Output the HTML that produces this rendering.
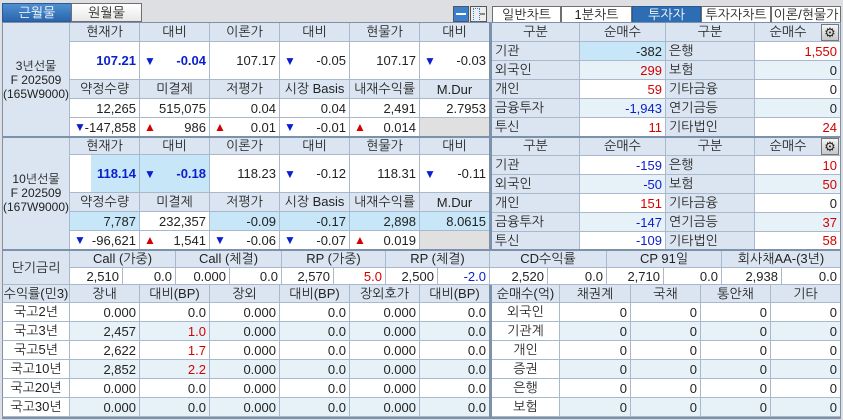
<!DOCTYPE html>
<html><head><meta charset="utf-8">
<style>
body{margin:0;width:843px;height:420px;background:#dedfe3;position:relative;overflow:hidden;font-family:"Liberation Sans","NanumGothic","Noto Sans CJK KR",sans-serif;font-size:13px;color:#222}
.c{position:absolute;box-sizing:border-box;border-right:1px solid #a9b9cb;border-bottom:1px solid #a9b9cb;display:flex;align-items:center;justify-content:flex-end;padding:0 3px;white-space:nowrap;overflow:hidden;background:#fff}
.h{background:#dbe5f1;justify-content:center}
.l{justify-content:flex-start;background:#dbe5f1}
.m{justify-content:center}
.a{background:#e6f2f8}
.s{background:#c7e6f7}
.g{background:#e0e0e0}
.b{color:#0a1ecf}
.rd{color:#d40000}
.bb{color:#0a1ecf;font-weight:bold}
.dn,.up{position:absolute;left:4px;font-size:12px}
.dn{color:#0a1ecf}.up{color:#d40000}
.ln{position:absolute;background:#7d91aa}
.lab{padding:0;font-size:12px;text-align:center;line-height:14px}
.tab{position:absolute;box-sizing:border-box;border:1px solid #6f6f6f;background:linear-gradient(#fff,#e8e8e8);display:flex;align-items:center;justify-content:center;font-size:13px}
.on{background:linear-gradient(#4f8fd0,#2a66ae);color:#fff;border-color:#2a5a96}
</style></head><body>
<div class="tab on" style="left:2px;top:3px;width:70px;height:19px">근월물</div>
<div class="tab" style="left:71px;top:3px;width:71px;height:19px">원월물</div>
<div style="position:absolute;left:453px;top:6px;width:16px;height:16px;background:#3b7fd0;border:1px solid #555;box-sizing:border-box"><div style="position:absolute;left:2px;top:6px;width:10px;height:2px;background:#fff"></div></div>
<div style="position:absolute;left:470px;top:6px;width:17px;height:16px;background:#eee;border:1px solid #555;box-sizing:border-box"><div style="position:absolute;left:2px;top:1px;width:5px;height:12px;border:1px dotted #3b7fd0"></div><div style="position:absolute;left:9px;top:6px;width:5px;height:2px;background:#888"></div></div>
<div class="tab" style="left:492px;top:6px;width:69px;height:17px;background:#fff">일반차트</div>
<div class="tab" style="left:561px;top:6px;width:71px;height:17px;background:#fff">1분차트</div>
<div class="tab on" style="left:632px;top:6px;width:69px;height:17px;background:#2c6db4">투자자</div>
<div class="tab" style="left:701px;top:6px;width:70px;height:17px;background:#fff">투자자차트</div>
<div class="tab" style="left:771px;top:6px;width:70px;height:17px;background:#fff">이론/현물가</div>

<div class="c h lab" style="left:2px;top:23px;width:68px;height:114px;border-left:1px solid #7d91aa">3년선물<br>F 202509<br>(165W9000)</div>
<div class="c h" style="left:70px;top:23px;width:70px;height:19px">현재가</div>
<div class="c h" style="left:140px;top:23px;width:70px;height:19px">대비</div>
<div class="c h" style="left:210px;top:23px;width:70px;height:19px">이론가</div>
<div class="c h" style="left:280px;top:23px;width:70px;height:19px">대비</div>
<div class="c h" style="left:350px;top:23px;width:70px;height:19px">현물가</div>
<div class="c h" style="left:420px;top:23px;width:70px;height:19px">대비</div>
<div class="c bb" style="left:70px;top:42px;width:70px;height:38px">107.21</div>
<div class="c bb" style="left:140px;top:42px;width:70px;height:38px"><span class="dn">▼</span>-0.04</div>
<div class="c" style="left:210px;top:42px;width:70px;height:38px">107.17</div>
<div class="c" style="left:280px;top:42px;width:70px;height:38px"><span class="dn">▼</span>-0.05</div>
<div class="c" style="left:350px;top:42px;width:70px;height:38px">107.17</div>
<div class="c" style="left:420px;top:42px;width:70px;height:38px"><span class="dn">▼</span>-0.03</div>
<div class="c h" style="left:70px;top:80px;width:70px;height:19px">약정수량</div>
<div class="c h" style="left:140px;top:80px;width:70px;height:19px">미결제</div>
<div class="c h" style="left:210px;top:80px;width:70px;height:19px">저평가</div>
<div class="c h" style="left:280px;top:80px;width:70px;height:19px">시장 Basis</div>
<div class="c h" style="left:350px;top:80px;width:70px;height:19px">내재수익률</div>
<div class="c h" style="left:420px;top:80px;width:70px;height:19px">M.Dur</div>
<div class="c" style="left:70px;top:99px;width:70px;height:19px">12,265</div>
<div class="c" style="left:140px;top:99px;width:70px;height:19px">515,075</div>
<div class="c" style="left:210px;top:99px;width:70px;height:19px">0.04</div>
<div class="c" style="left:280px;top:99px;width:70px;height:19px">0.04</div>
<div class="c" style="left:350px;top:99px;width:70px;height:19px">2,491</div>
<div class="c" style="left:420px;top:99px;width:70px;height:19px">2.7953</div>
<div class="c" style="left:70px;top:118px;width:70px;height:19px"><span class="dn">▼</span>-147,858</div>
<div class="c" style="left:140px;top:118px;width:70px;height:19px"><span class="up">▲</span>986</div>
<div class="c" style="left:210px;top:118px;width:70px;height:19px"><span class="up">▲</span>0.01</div>
<div class="c" style="left:280px;top:118px;width:70px;height:19px"><span class="dn">▼</span>-0.01</div>
<div class="c" style="left:350px;top:118px;width:70px;height:19px"><span class="up">▲</span>0.014</div>
<div class="c g" style="left:420px;top:118px;width:70px;height:19px"></div>

<div class="c h lab" style="left:2px;top:137px;width:68px;height:113px;border-left:1px solid #7d91aa">10년선물<br>F 202509<br>(167W9000)</div>
<div class="c h" style="left:70px;top:137px;width:70px;height:18px">현재가</div>
<div class="c h" style="left:140px;top:137px;width:70px;height:18px">대비</div>
<div class="c h" style="left:210px;top:137px;width:70px;height:18px">이론가</div>
<div class="c h" style="left:280px;top:137px;width:70px;height:18px">대비</div>
<div class="c h" style="left:350px;top:137px;width:70px;height:18px">현물가</div>
<div class="c h" style="left:420px;top:137px;width:70px;height:18px">대비</div>
<div class="c bb" style="left:70px;top:155px;width:70px;height:38px;background:linear-gradient(90deg,#fff 21px,#c7e6f7 21px)">118.14</div>
<div class="c bb s" style="left:140px;top:155px;width:70px;height:38px"><span class="dn">▼</span>-0.18</div>
<div class="c" style="left:210px;top:155px;width:70px;height:38px">118.23</div>
<div class="c" style="left:280px;top:155px;width:70px;height:38px"><span class="dn">▼</span>-0.12</div>
<div class="c" style="left:350px;top:155px;width:70px;height:38px">118.31</div>
<div class="c" style="left:420px;top:155px;width:70px;height:38px"><span class="dn">▼</span>-0.11</div>
<div class="c h" style="left:70px;top:193px;width:70px;height:19px">약정수량</div>
<div class="c h" style="left:140px;top:193px;width:70px;height:19px">미결제</div>
<div class="c h" style="left:210px;top:193px;width:70px;height:19px">저평가</div>
<div class="c h" style="left:280px;top:193px;width:70px;height:19px">시장 Basis</div>
<div class="c h" style="left:350px;top:193px;width:70px;height:19px">내재수익률</div>
<div class="c h" style="left:420px;top:193px;width:70px;height:19px">M.Dur</div>
<div class="c s" style="left:70px;top:212px;width:70px;height:19px">7,787</div>
<div class="c" style="left:140px;top:212px;width:70px;height:19px">232,357</div>
<div class="c s" style="left:210px;top:212px;width:70px;height:19px">-0.09</div>
<div class="c s" style="left:280px;top:212px;width:70px;height:19px">-0.17</div>
<div class="c s" style="left:350px;top:212px;width:70px;height:19px">2,898</div>
<div class="c s" style="left:420px;top:212px;width:70px;height:19px">8.0615</div>
<div class="c" style="left:70px;top:231px;width:70px;height:19px"><span class="dn">▼</span>-96,621</div>
<div class="c" style="left:140px;top:231px;width:70px;height:19px"><span class="up">▲</span>1,541</div>
<div class="c" style="left:210px;top:231px;width:70px;height:19px"><span class="dn">▼</span>-0.06</div>
<div class="c" style="left:280px;top:231px;width:70px;height:19px"><span class="dn">▼</span>-0.07</div>
<div class="c" style="left:350px;top:231px;width:70px;height:19px"><span class="up">▲</span>0.019</div>
<div class="c g" style="left:420px;top:231px;width:70px;height:19px"></div>

<div class="c h" style="left:492px;top:23px;width:88px;height:19px">구분</div>
<div class="c h" style="left:580px;top:23px;width:86px;height:19px">순매수</div>
<div class="c h" style="left:666px;top:23px;width:89px;height:19px">구분</div>
<div class="c h" style="left:755px;top:23px;width:86px;height:19px;padding-right:22px">순매수</div>
<div style="position:absolute;left:821px;top:24px;width:18px;height:17px;background:linear-gradient(#f4f4f4,#c8c8c8);border:1px solid #777;box-sizing:border-box;font-size:13px;line-height:15px;text-align:center;color:#222">⚙</div>
<div class="c l" style="left:492px;top:42px;width:88px;height:19px">기관</div>
<div class="c s" style="left:580px;top:42px;width:86px;height:19px">-382</div>
<div class="c l" style="left:666px;top:42px;width:89px;height:19px">은행</div>
<div class="c rd" style="left:755px;top:42px;width:86px;height:19px">1,550</div>
<div class="c l" style="left:492px;top:61px;width:88px;height:19px">외국인</div>
<div class="c a rd" style="left:580px;top:61px;width:86px;height:19px">299</div>
<div class="c l" style="left:666px;top:61px;width:89px;height:19px">보험</div>
<div class="c a" style="left:755px;top:61px;width:86px;height:19px">0</div>
<div class="c l" style="left:492px;top:80px;width:88px;height:19px">개인</div>
<div class="c rd" style="left:580px;top:80px;width:86px;height:19px">59</div>
<div class="c l" style="left:666px;top:80px;width:89px;height:19px">기타금융</div>
<div class="c" style="left:755px;top:80px;width:86px;height:19px">0</div>
<div class="c l" style="left:492px;top:99px;width:88px;height:19px">금융투자</div>
<div class="c a b" style="left:580px;top:99px;width:86px;height:19px">-1,943</div>
<div class="c l" style="left:666px;top:99px;width:89px;height:19px">연기금등</div>
<div class="c a" style="left:755px;top:99px;width:86px;height:19px">0</div>
<div class="c l" style="left:492px;top:118px;width:88px;height:19px">투신</div>
<div class="c rd" style="left:580px;top:118px;width:86px;height:19px">11</div>
<div class="c l" style="left:666px;top:118px;width:89px;height:19px">기타법인</div>
<div class="c rd" style="left:755px;top:118px;width:86px;height:19px">24</div>

<div class="c h" style="left:492px;top:137px;width:88px;height:19px">구분</div>
<div class="c h" style="left:580px;top:137px;width:86px;height:19px">순매수</div>
<div class="c h" style="left:666px;top:137px;width:89px;height:19px">구분</div>
<div class="c h" style="left:755px;top:137px;width:86px;height:19px;padding-right:22px">순매수</div>
<div style="position:absolute;left:821px;top:138px;width:18px;height:17px;background:linear-gradient(#f4f4f4,#c8c8c8);border:1px solid #777;box-sizing:border-box;font-size:13px;line-height:15px;text-align:center;color:#222">⚙</div>
<div class="c l" style="left:492px;top:156px;width:88px;height:19px">기관</div>
<div class="c b" style="left:580px;top:156px;width:86px;height:19px">-159</div>
<div class="c l" style="left:666px;top:156px;width:89px;height:19px">은행</div>
<div class="c rd" style="left:755px;top:156px;width:86px;height:19px">10</div>
<div class="c l" style="left:492px;top:175px;width:88px;height:19px">외국인</div>
<div class="c a b" style="left:580px;top:175px;width:86px;height:19px">-50</div>
<div class="c l" style="left:666px;top:175px;width:89px;height:19px">보험</div>
<div class="c a rd" style="left:755px;top:175px;width:86px;height:19px">50</div>
<div class="c l" style="left:492px;top:194px;width:88px;height:19px">개인</div>
<div class="c rd" style="left:580px;top:194px;width:86px;height:19px">151</div>
<div class="c l" style="left:666px;top:194px;width:89px;height:19px">기타금융</div>
<div class="c" style="left:755px;top:194px;width:86px;height:19px">0</div>
<div class="c l" style="left:492px;top:213px;width:88px;height:19px">금융투자</div>
<div class="c a b" style="left:580px;top:213px;width:86px;height:19px">-147</div>
<div class="c l" style="left:666px;top:213px;width:89px;height:19px">연기금등</div>
<div class="c a rd" style="left:755px;top:213px;width:86px;height:19px">37</div>
<div class="c l" style="left:492px;top:232px;width:88px;height:18px">투신</div>
<div class="c b" style="left:580px;top:232px;width:86px;height:18px">-109</div>
<div class="c l" style="left:666px;top:232px;width:89px;height:18px">기타법인</div>
<div class="c rd" style="left:755px;top:232px;width:86px;height:18px">58</div>

<div class="c h" style="left:2px;top:251px;width:68px;height:34px;border-left:1px solid #7d91aa">단기금리</div>
<div class="c h" style="left:70px;top:251px;width:106px;height:17px">Call (가중)</div>
<div class="c h" style="left:176px;top:251px;width:106px;height:17px">Call (체결)</div>
<div class="c h" style="left:282px;top:251px;width:104px;height:17px">RP (가중)</div>
<div class="c h" style="left:386px;top:251px;width:104px;height:17px">RP (체결)</div>
<div class="c h" style="left:490px;top:251px;width:117px;height:17px">CD수익률</div>
<div class="c h" style="left:607px;top:251px;width:115px;height:17px">CP 91일</div>
<div class="c h" style="left:722px;top:251px;width:119px;height:17px">회사채AA-(3년)</div>
<div class="c" style="left:70px;top:268px;width:53px;height:17px">2,510</div>
<div class="c" style="left:123px;top:268px;width:53px;height:17px">0.0</div>
<div class="c" style="left:176px;top:268px;width:54px;height:17px">0.000</div>
<div class="c" style="left:230px;top:268px;width:52px;height:17px">0.0</div>
<div class="c" style="left:282px;top:268px;width:52px;height:17px">2,570</div>
<div class="c rd" style="left:334px;top:268px;width:52px;height:17px">5.0</div>
<div class="c" style="left:386px;top:268px;width:52px;height:17px">2,500</div>
<div class="c b" style="left:438px;top:268px;width:52px;height:17px">-2.0</div>
<div class="c" style="left:490px;top:268px;width:58px;height:17px">2,520</div>
<div class="c" style="left:548px;top:268px;width:59px;height:17px">0.0</div>
<div class="c" style="left:607px;top:268px;width:57px;height:17px">2,710</div>
<div class="c" style="left:664px;top:268px;width:58px;height:17px">0.0</div>
<div class="c" style="left:722px;top:268px;width:60px;height:17px">2,938</div>
<div class="c" style="left:782px;top:268px;width:59px;height:17px">0.0</div>

<div class="c h" style="left:2px;top:285px;width:68px;height:18px;border-left:1px solid #7d91aa;padding:0">수익률(민3)</div>
<div class="c h" style="left:70px;top:285px;width:70px;height:18px">장내</div>
<div class="c h" style="left:140px;top:285px;width:70px;height:18px">대비(BP)</div>
<div class="c h" style="left:210px;top:285px;width:70px;height:18px">장외</div>
<div class="c h" style="left:280px;top:285px;width:70px;height:18px">대비(BP)</div>
<div class="c h" style="left:350px;top:285px;width:70px;height:18px">장외호가</div>
<div class="c h" style="left:420px;top:285px;width:70px;height:18px">대비(BP)</div>
<div class="c h" style="left:492px;top:285px;width:68px;height:18px;padding:0">순매수(억)</div>
<div class="c h" style="left:560px;top:285px;width:71px;height:18px">채권계</div>
<div class="c h" style="left:631px;top:285px;width:70px;height:18px">국채</div>
<div class="c h" style="left:701px;top:285px;width:70px;height:18px">통안채</div>
<div class="c h" style="left:771px;top:285px;width:70px;height:18px">기타</div>

<div class="c m" style="left:2px;top:303px;width:68px;height:19px;border-left:1px solid #7d91aa">국고2년</div>
<div class="c" style="left:70px;top:303px;width:70px;height:19px">0.000</div><div class="c" style="left:140px;top:303px;width:70px;height:19px">0.0</div><div class="c" style="left:210px;top:303px;width:70px;height:19px">0.000</div><div class="c" style="left:280px;top:303px;width:70px;height:19px">0.0</div><div class="c" style="left:350px;top:303px;width:70px;height:19px">0.000</div><div class="c" style="left:420px;top:303px;width:70px;height:19px">0.0</div>
<div class="c m" style="left:2px;top:322px;width:68px;height:19px;border-left:1px solid #7d91aa">국고3년</div>
<div class="c a" style="left:70px;top:322px;width:70px;height:19px">2,457</div><div class="c a rd" style="left:140px;top:322px;width:70px;height:19px">1.0</div><div class="c a" style="left:210px;top:322px;width:70px;height:19px">0.000</div><div class="c a" style="left:280px;top:322px;width:70px;height:19px">0.0</div><div class="c a" style="left:350px;top:322px;width:70px;height:19px">0.000</div><div class="c a" style="left:420px;top:322px;width:70px;height:19px">0.0</div>
<div class="c m" style="left:2px;top:341px;width:68px;height:19px;border-left:1px solid #7d91aa">국고5년</div>
<div class="c" style="left:70px;top:341px;width:70px;height:19px">2,622</div><div class="c rd" style="left:140px;top:341px;width:70px;height:19px">1.7</div><div class="c" style="left:210px;top:341px;width:70px;height:19px">0.000</div><div class="c" style="left:280px;top:341px;width:70px;height:19px">0.0</div><div class="c" style="left:350px;top:341px;width:70px;height:19px">0.000</div><div class="c" style="left:420px;top:341px;width:70px;height:19px">0.0</div>
<div class="c m" style="left:2px;top:360px;width:68px;height:19px;border-left:1px solid #7d91aa">국고10년</div>
<div class="c a" style="left:70px;top:360px;width:70px;height:19px">2,852</div><div class="c a rd" style="left:140px;top:360px;width:70px;height:19px">2.2</div><div class="c a" style="left:210px;top:360px;width:70px;height:19px">0.000</div><div class="c a" style="left:280px;top:360px;width:70px;height:19px">0.0</div><div class="c a" style="left:350px;top:360px;width:70px;height:19px">0.000</div><div class="c a" style="left:420px;top:360px;width:70px;height:19px">0.0</div>
<div class="c m" style="left:2px;top:379px;width:68px;height:19px;border-left:1px solid #7d91aa">국고20년</div>
<div class="c" style="left:70px;top:379px;width:70px;height:19px">0.000</div><div class="c" style="left:140px;top:379px;width:70px;height:19px">0.0</div><div class="c" style="left:210px;top:379px;width:70px;height:19px">0.000</div><div class="c" style="left:280px;top:379px;width:70px;height:19px">0.0</div><div class="c" style="left:350px;top:379px;width:70px;height:19px">0.000</div><div class="c" style="left:420px;top:379px;width:70px;height:19px">0.0</div>
<div class="c m" style="left:2px;top:398px;width:68px;height:19px;border-left:1px solid #7d91aa">국고30년</div>
<div class="c a" style="left:70px;top:398px;width:70px;height:19px">0.000</div><div class="c a" style="left:140px;top:398px;width:70px;height:19px">0.0</div><div class="c a" style="left:210px;top:398px;width:70px;height:19px">0.000</div><div class="c a" style="left:280px;top:398px;width:70px;height:19px">0.0</div><div class="c a" style="left:350px;top:398px;width:70px;height:19px">0.000</div><div class="c a" style="left:420px;top:398px;width:70px;height:19px">0.0</div>

<div class="c m" style="left:492px;top:303px;width:68px;height:19px">외국인</div>
<div class="c" style="left:560px;top:303px;width:71px;height:19px">0</div><div class="c" style="left:631px;top:303px;width:70px;height:19px">0</div><div class="c" style="left:701px;top:303px;width:70px;height:19px">0</div><div class="c" style="left:771px;top:303px;width:70px;height:19px">0</div>
<div class="c m" style="left:492px;top:322px;width:68px;height:19px">기관계</div>
<div class="c a" style="left:560px;top:322px;width:71px;height:19px">0</div><div class="c a" style="left:631px;top:322px;width:70px;height:19px">0</div><div class="c a" style="left:701px;top:322px;width:70px;height:19px">0</div><div class="c a" style="left:771px;top:322px;width:70px;height:19px">0</div>
<div class="c m" style="left:492px;top:341px;width:68px;height:19px">개인</div>
<div class="c" style="left:560px;top:341px;width:71px;height:19px">0</div><div class="c" style="left:631px;top:341px;width:70px;height:19px">0</div><div class="c" style="left:701px;top:341px;width:70px;height:19px">0</div><div class="c" style="left:771px;top:341px;width:70px;height:19px">0</div>
<div class="c m" style="left:492px;top:360px;width:68px;height:19px">증권</div>
<div class="c a" style="left:560px;top:360px;width:71px;height:19px">0</div><div class="c a" style="left:631px;top:360px;width:70px;height:19px">0</div><div class="c a" style="left:701px;top:360px;width:70px;height:19px">0</div><div class="c a" style="left:771px;top:360px;width:70px;height:19px">0</div>
<div class="c m" style="left:492px;top:379px;width:68px;height:19px">은행</div>
<div class="c" style="left:560px;top:379px;width:71px;height:19px">0</div><div class="c" style="left:631px;top:379px;width:70px;height:19px">0</div><div class="c" style="left:701px;top:379px;width:70px;height:19px">0</div><div class="c" style="left:771px;top:379px;width:70px;height:19px">0</div>
<div class="c m" style="left:492px;top:398px;width:68px;height:19px">보험</div>
<div class="c a" style="left:560px;top:398px;width:71px;height:19px">0</div><div class="c a" style="left:631px;top:398px;width:70px;height:19px">0</div><div class="c a" style="left:701px;top:398px;width:70px;height:19px">0</div><div class="c a" style="left:771px;top:398px;width:70px;height:19px">0</div>

<div class="ln" style="left:2px;top:22px;width:839px;height:1px"></div>
<div class="ln" style="left:2px;top:136px;width:839px;height:2px"></div>
<div class="ln" style="left:2px;top:249px;width:839px;height:2px"></div>
<div class="ln" style="left:489px;top:23px;width:3px;height:227px"></div>
<div class="ln" style="left:489px;top:285px;width:3px;height:133px"></div>
<div class="ln" style="left:2px;top:417px;width:839px;height:2px"></div>
<div class="ln" style="left:840px;top:22px;width:1px;height:397px"></div>
</body></html>
